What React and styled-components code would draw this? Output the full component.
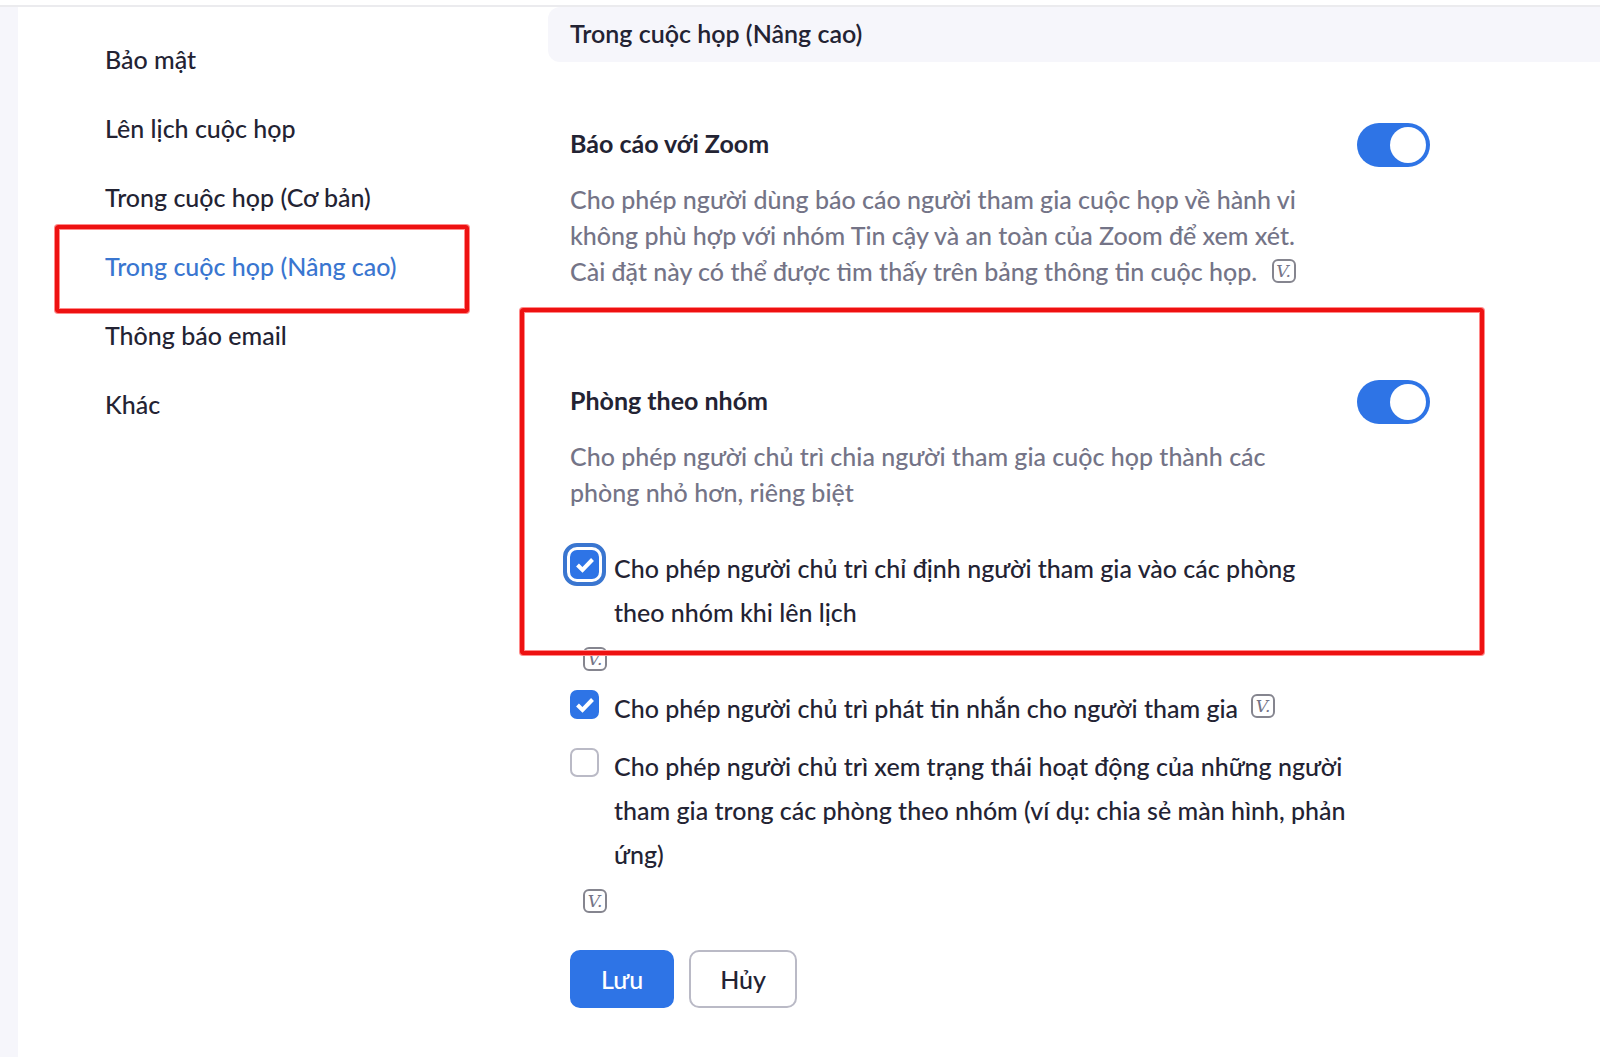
import React, { useState } from "react";
import styled, { createGlobalStyle, css } from "styled-components";

const color = {
  ink: "#232333",
  muted: "#747487",
  blue: "#2e74e6",
  ring: "#3a76d0",
  panel: "#f6f6fb",
  line: "#ebebee",
  border: "#babac6",
  mark: "#ee1111",
};

const GlobalStyle = createGlobalStyle`
  *, *::before, *::after { box-sizing: border-box; }
  body {
    margin: 0;
    background: #fff;
    color: ${color.ink};
    font-family: Lato, "Open Sans", sans-serif;
    font-size: 25px;
    font-weight: 500;
    line-height: 36px;
  }
`;

const Page = styled.div`
  display: flex;
  flex-direction: column;
  min-height: 100vh;
`;

const TopBar = styled.header`
  height: 7px;
  border-bottom: 2px solid ${color.line};
`;

const Body = styled.div`
  display: flex;
  flex: 1;
  border-left: 18px solid ${color.panel};
`;

const Nav = styled.nav`
  flex: 0 0 530px;
  padding: 34px 79px 0 87px;
`;

const NavList = styled.ul`
  display: flex;
  flex-direction: column;
  gap: 33px;
  margin: 0;
  padding: 0;
  list-style: none;
`;

const NavItem = styled.li`
  position: relative;
`;

const NavLink = styled.a`
  color: ${(p) => (p.$active ? color.ring : color.ink)};
  text-decoration: none;
`;

const Marker = styled.div`
  position: absolute;
  inset: ${(p) => p.$inset};
  border: 4px solid ${color.mark};
  border-radius: 3px;
  box-shadow: 0 0 0 1px #ff8a8a, inset 0 0 0 1px #ff8a8a;
  pointer-events: none;
`;

const Content = styled.main`
  flex: 1;
  min-width: 0;
`;

const SectionHeader = styled.h2`
  margin: 0;
  padding: 8px 22px 11px;
  border-radius: 12px 0 0 12px;
  background: ${color.panel};
  font-size: 25px;
  font-weight: 600;
`;

const Settings = styled.div`
  display: flex;
  flex-direction: column;
  gap: 93px;
  padding: 63px 170px 48px 22px;
`;

const Setting = styled.section`
  position: relative;
  display: flex;
  justify-content: space-between;
  align-items: flex-start;
`;

const SettingBody = styled.div`
  flex: 1;
  min-width: 0;
`;

const Title = styled.h3`
  margin: 0 0 20px;
  font-size: 25px;
  font-weight: 700;
`;

const Description = styled.p`
  max-width: 740px;
  margin: 0;
  color: ${color.muted};
`;

const Toggle = styled.input`
  appearance: none;
  flex: none;
  display: flex;
  align-items: center;
  width: 73px;
  height: 44px;
  margin: -2px 0 0;
  padding: 4px;
  border-radius: 22px;
  background: ${color.border};
  cursor: pointer;

  &::before {
    content: "";
    width: 36px;
    height: 36px;
    border-radius: 50%;
    background: #fff;
  }
  &:checked {
    justify-content: flex-end;
    background: ${color.blue};
  }
`;

const Options = styled.div`
  display: flex;
  flex-direction: column;
  gap: 14px;
  margin-top: 36px;
`;

const Option = styled.div`
  display: flex;
  flex-wrap: wrap;
  align-items: flex-start;
  row-gap: 5px;
  max-width: 778px;
`;

const OptionLabel = styled.label`
  display: flex;
  align-items: flex-start;
  gap: 15px;
  line-height: 44px;
`;

const CheckWrap = styled.span`
  display: grid;
  flex: none;
  margin-top: 4px;

  & > * {
    grid-area: 1 / 1;
  }
`;

const Check = styled.input`
  appearance: none;
  width: 29px;
  height: 29px;
  margin: 0;
  border: 2px solid ${color.border};
  border-radius: 7px;
  background: #fff;

  &:checked {
    border-color: ${color.blue};
    background: ${color.blue};
  }
  ${(p) =>
    p.$ring &&
    css`
      outline: 4px solid ${color.ring};
      outline-offset: 3px;
    `}
`;

const Tick = styled.svg`
  width: 29px;
  height: 29px;
  fill: none;
  stroke: #fff;
  stroke-width: 4;
  pointer-events: none;
`;

const BadgeBox = styled.span`
  display: inline-flex;
  flex: none;
  justify-content: center;
  align-items: center;
  width: 24px;
  height: 24px;
  border: 2px solid #85858f;
  border-radius: 6px;
  color: ${color.muted};
  font: italic 17px/20px "DejaVu Serif", serif;
  ${(p) =>
    p.$inline
      ? css`
          margin-left: 8px;
          vertical-align: 4px;
        `
      : css`
          margin: 8px 0 1px 13px;
        `}
`;

const Actions = styled.div`
  display: flex;
  gap: 15px;
  margin-top: 36px;
`;

const Button = styled.button`
  height: 58px;
  padding: 0 29px;
  border: 2px solid ${(p) => (p.$primary ? color.blue : color.border)};
  border-radius: 10px;
  background: ${(p) => (p.$primary ? color.blue : "#fff")};
  color: ${(p) => (p.$primary ? "#fff" : color.ink)};
  font: inherit;
  cursor: pointer;
`;

const navItems = [
  "Bảo mật",
  "Lên lịch cuộc họp",
  "Trong cuộc họp (Cơ bản)",
  "Trong cuộc họp (Nâng cao)",
  "Thông báo email",
  "Khác",
];
const activeItem = 3;

const options = [
  {
    id: "assign",
    text: "Cho phép người chủ trì chỉ định người tham gia vào các phòng theo nhóm khi lên lịch",
    checked: true,
    ring: true,
  },
  {
    id: "broadcast",
    text: "Cho phép người chủ trì phát tin nhắn cho người tham gia",
    checked: true,
  },
  {
    id: "activity",
    text: "Cho phép người chủ trì xem trạng thái hoạt động của những người tham gia trong các phòng theo nhóm (ví dụ: chia sẻ màn hình, phản ứng)",
    checked: false,
  },
];

function CheckOption({ id, text, checked, ring }) {
  const [on, setOn] = useState(checked);
  return (
    <Option>
      <OptionLabel htmlFor={id}>
        <CheckWrap>
          <Check
            id={id}
            type="checkbox"
            checked={on}
            onChange={() => setOn(!on)}
            $ring={ring}
          />
          {on && (
            <Tick viewBox="0 0 29 29" aria-hidden="true">
              <path d="M7.5 15 L12.5 20 L22.5 9.5" />
            </Tick>
          )}
        </CheckWrap>
        <span>{text}</span>
      </OptionLabel>
      <BadgeBox>V.</BadgeBox>
    </Option>
  );
}

export default function App() {
  return (
    <Page>
      <GlobalStyle />
      <TopBar />
      <Body>
        <Nav>
          <NavList>
            {navItems.map((item, i) => (
              <NavItem key={item}>
                <NavLink href="#" $active={i === activeItem}>
                  {item}
                </NavLink>
                {i === activeItem && <Marker $inset="-23px 0 -29px -50px" />}
              </NavItem>
            ))}
          </NavList>
        </Nav>
        <Content>
          <SectionHeader>Trong cuộc họp (Nâng cao)</SectionHeader>
          <Settings>
            <Setting>
              <SettingBody>
                <Title id="report-title">Báo cáo với Zoom</Title>
                <Description>
                  Cho phép người dùng báo cáo người tham gia cuộc họp về hành vi
                  không phù hợp với nhóm Tin cậy và an toàn của Zoom để xem xét.
                  Cài đặt này có thể được tìm thấy trên bảng thông tin cuộc họp.{" "}
                  <BadgeBox $inline>V.</BadgeBox>
                </Description>
              </SettingBody>
              <Toggle
                type="checkbox"
                role="switch"
                aria-labelledby="report-title"
                defaultChecked
              />
            </Setting>
            <Setting>
              <SettingBody>
                <Title id="rooms-title">Phòng theo nhóm</Title>
                <Description>
                  Cho phép người chủ trì chia người tham gia cuộc họp thành các
                  phòng nhỏ hơn, riêng biệt
                </Description>
                <Options>
                  {options.map((option) => (
                    <CheckOption key={option.id} {...option} />
                  ))}
                </Options>
                <Actions>
                  <Button type="button" $primary>
                    Lưu
                  </Button>
                  <Button type="button">Hủy</Button>
                </Actions>
              </SettingBody>
              <Toggle
                type="checkbox"
                role="switch"
                aria-labelledby="rooms-title"
                defaultChecked
              />
              <Marker $inset="-74px -54px 353px -50px" />
            </Setting>
          </Settings>
        </Content>
      </Body>
    </Page>
  );
}
